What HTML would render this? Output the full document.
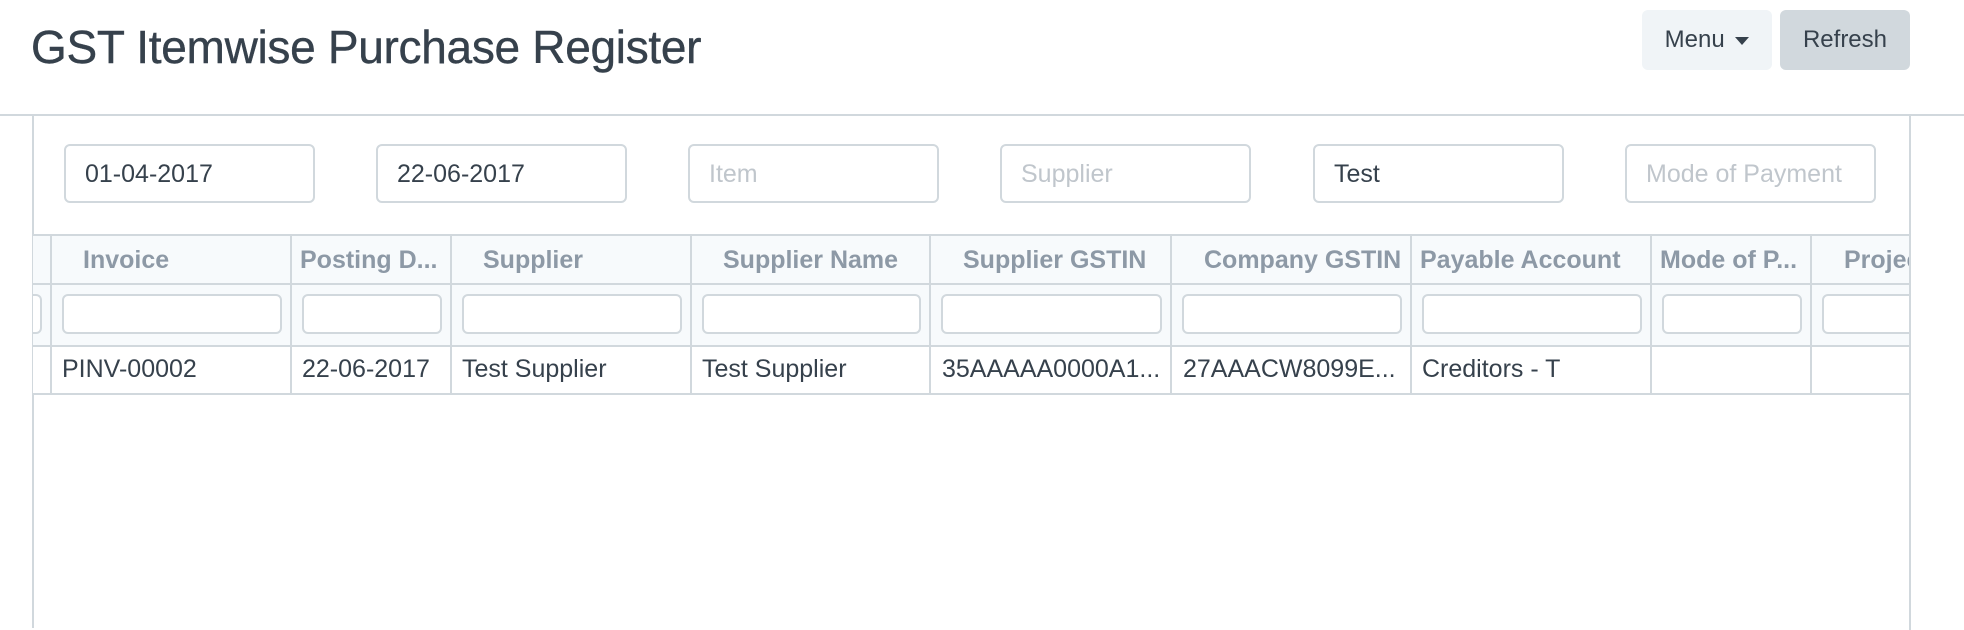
<!DOCTYPE html>
<html><head><meta charset="utf-8"><style>
*{box-sizing:border-box;margin:0;padding:0}
body{width:1964px;height:628px;background:#fff;font-family:"Liberation Sans",Arial,sans-serif;color:#36414c;position:relative;overflow:hidden}
.abs{position:absolute}
h1{position:absolute;left:31px;top:20px;font-size:46px;font-weight:normal;color:#36414c;letter-spacing:-0.3px;white-space:nowrap;line-height:54px;-webkit-text-stroke:0.4px #36414c}
.btn{position:absolute;top:10px;height:60px;border-radius:6px;font-size:24px;line-height:60px;text-align:center;color:#36414c}
.hline{position:absolute;left:0;top:114px;width:1964px;height:2px;background:#d1d8dd}
.vl{position:absolute;top:114px;width:2px;height:514px;background:#d1d8dd}
.fi{position:absolute;top:144px;width:251px;height:59px;border:2px solid #d1d8dd;border-radius:6px;font-size:25px;line-height:57px;padding-left:19px;color:#36414c}
.fi.ph{color:#c0c6cc}
.thead{position:absolute;left:33px;top:234px;width:1878px;height:113px;background:#f7fafc;border-top:2px solid #d1d8dd;border-bottom:2px solid #d1d8dd}
.rowline{position:absolute;left:33px;width:1878px;height:2px;background:#d1d8dd}
.cl{position:absolute;top:234px;width:2px;height:161px;background:#d1d8dd}
.ht{position:absolute;top:245px;font-size:25px;font-weight:bold;color:#8d99a6;white-space:nowrap;line-height:30px}
.dt{position:absolute;top:354px;font-size:25px;color:#36414c;white-space:nowrap;line-height:30px}
.ci{position:absolute;top:294px;height:40px;background:#fff;border:2px solid #d1d8dd;border-radius:6px}
</style></head><body>
<h1>GST Itemwise Purchase Register</h1>
<div class="btn" style="left:1642px;width:130px;background:#f0f4f7">Menu <span style="display:inline-block;width:0;height:0;border-left:7px solid transparent;border-right:7px solid transparent;border-top:8px solid #36414c;vertical-align:middle;margin-left:4px"></span></div>
<div class="btn" style="left:1780px;width:130px;background:#d1d8dd">Refresh</div>
<div class="hline"></div>
<div class="vl" style="left:32px"></div>
<div class="vl" style="left:1909px"></div>

<div class="fi" style="left:64px">01-04-2017</div>
<div class="fi" style="left:376px">22-06-2017</div>
<div class="fi ph" style="left:688px">Item</div>
<div class="fi ph" style="left:1000px">Supplier</div>
<div class="fi" style="left:1313px">Test</div>
<div class="fi ph" style="left:1625px">Mode of Payment</div>

<div class="thead"></div>
<div class="rowline" style="top:283px"></div>
<div class="abs" style="left:33px;top:347px;width:1876px;height:46px;background:#fff"></div>
<div class="rowline" style="top:393px"></div>

<div class="cl" style="left:50px"></div>
<div class="cl" style="left:290px"></div>
<div class="cl" style="left:450px"></div>
<div class="cl" style="left:690px"></div>
<div class="cl" style="left:929px"></div>
<div class="cl" style="left:1170px"></div>
<div class="cl" style="left:1410px"></div>
<div class="cl" style="left:1650px"></div>
<div class="cl" style="left:1810px"></div>

<div class="ci" style="left:33px;width:9px;border-left:none;border-radius:0 6px 6px 0"></div>
<div class="ci" style="left:62px;width:220px"></div>
<div class="ci" style="left:302px;width:140px"></div>
<div class="ci" style="left:462px;width:220px"></div>
<div class="ci" style="left:702px;width:219px"></div>
<div class="ci" style="left:941px;width:221px"></div>
<div class="ci" style="left:1182px;width:220px"></div>
<div class="ci" style="left:1422px;width:220px"></div>
<div class="ci" style="left:1662px;width:140px"></div>
<div class="ci" style="left:1822px;width:100px"></div>

<div class="ht" style="left:83px">Invoice</div>
<div class="ht" style="left:300px">Posting D...</div>
<div class="ht" style="left:483px">Supplier</div>
<div class="ht" style="left:723px">Supplier Name</div>
<div class="ht" style="left:963px">Supplier GSTIN</div>
<div class="ht" style="left:1204px">Company GSTIN</div>
<div class="ht" style="left:1420px">Payable Account</div>
<div class="ht" style="left:1660px">Mode of P...</div>
<div class="ht" style="left:1844px">Projec</div>

<div class="dt" style="left:62px">PINV-00002</div>
<div class="dt" style="left:302px">22-06-2017</div>
<div class="dt" style="left:462px">Test Supplier</div>
<div class="dt" style="left:702px">Test Supplier</div>
<div class="dt" style="left:942px">35AAAAA0000A1...</div>
<div class="dt" style="left:1183px">27AAACW8099E...</div>
<div class="dt" style="left:1422px">Creditors - T</div>

<div class="abs" style="left:1911px;top:116px;width:53px;height:512px;background:#fff"></div>
<div class="vl" style="left:1909px;top:116px"></div>
</body></html>
